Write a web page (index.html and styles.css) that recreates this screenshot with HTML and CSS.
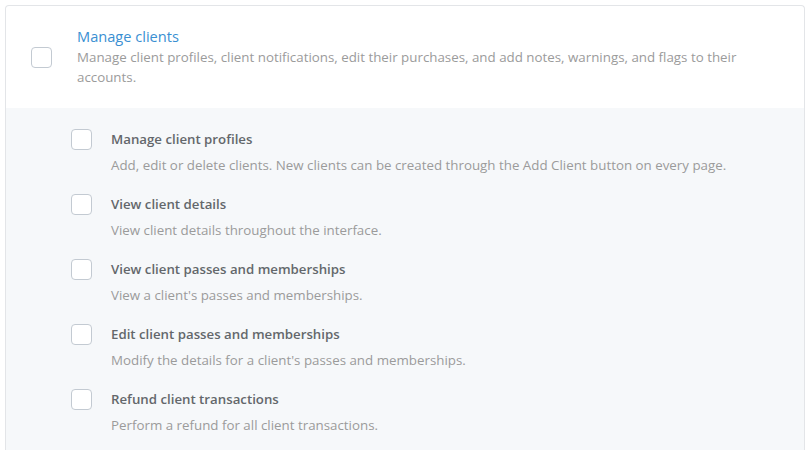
FILE: index.html
```html
<!DOCTYPE html>
<html>
<head>
<meta charset="utf-8">
<link rel="stylesheet" href="styles.css">
</head>
<body>
<div class="card">
  <div class="header">
    <span class="checkbox"></span>
    <div class="header-text">
      <div class="title">Manage clients</div>
      <div class="desc">Manage client profiles, client notifications, edit their purchases, and add notes, warnings, and flags to their accounts.</div>
    </div>
  </div>
  <div class="list">
    <div class="item">
      <span class="checkbox"></span>
      <div class="item-text">
        <div class="item-title">Manage client profiles</div>
        <div class="item-desc">Add, edit or delete clients. New clients can be created through the Add Client button on every page.</div>
      </div>
    </div>
    <div class="item">
      <span class="checkbox"></span>
      <div class="item-text">
        <div class="item-title">View client details</div>
        <div class="item-desc">View client details throughout the interface.</div>
      </div>
    </div>
    <div class="item">
      <span class="checkbox"></span>
      <div class="item-text">
        <div class="item-title">View client passes and memberships</div>
        <div class="item-desc">View a client's passes and memberships.</div>
      </div>
    </div>
    <div class="item">
      <span class="checkbox"></span>
      <div class="item-text">
        <div class="item-title">Edit client passes and memberships</div>
        <div class="item-desc">Modify the details for a client's passes and memberships.</div>
      </div>
    </div>
    <div class="item">
      <span class="checkbox"></span>
      <div class="item-text">
        <div class="item-title">Refund client transactions</div>
        <div class="item-desc">Perform a refund for all client transactions.</div>
      </div>
    </div>
  </div>
</div>
</body>
</html>
```

FILE: styles.css
```css
html, body {
  margin: 0;
  padding: 0;
  background: #ffffff;
}
body {
  font-family: "Open Sans", "Liberation Sans", sans-serif;
  padding: 5px 0 0 5px;
  overflow: hidden;
  height: 445px;
}
.card {
  width: 798px;
  border: 1px solid #e3e5e8;
  border-bottom: none;
  border-radius: 4px 4px 0 0;
  background: #ffffff;
  height: 445px;
  overflow: hidden;
}
.checkbox {
  display: block;
  flex: none;
  box-sizing: border-box;
  width: 21px;
  height: 21px;
  border: 1px solid #c3cad2;
  border-radius: 4px;
  background: #ffffff;
}
.header {
  display: flex;
  align-items: center;
  padding: 21px 30px 21px 25px;
  gap: 25px;
}
.title {
  font-size: 14.6px;
  line-height: 19px;
  margin-bottom: 1px;
  color: #3a8fd2;
}
.desc {
  font-size: 13.33px;
  line-height: 20px;
  color: #9b9b9b;
}
.list {
  background: #f6f8fa;
  padding: 21px 0 20px 65px;
  display: flex;
  flex-direction: column;
  gap: 19px;
  height: 100%;
}
.item {
  display: flex;
  align-items: flex-start;
  gap: 19px;
}
.item-title {
  font-size: 13.25px;
  line-height: 20px;
  font-weight: 600;
  color: #63676b;
}
.item-desc {
  margin-top: 6px;
  font-size: 13.33px;
  line-height: 20px;
  color: #9b9b9b;
}
```
